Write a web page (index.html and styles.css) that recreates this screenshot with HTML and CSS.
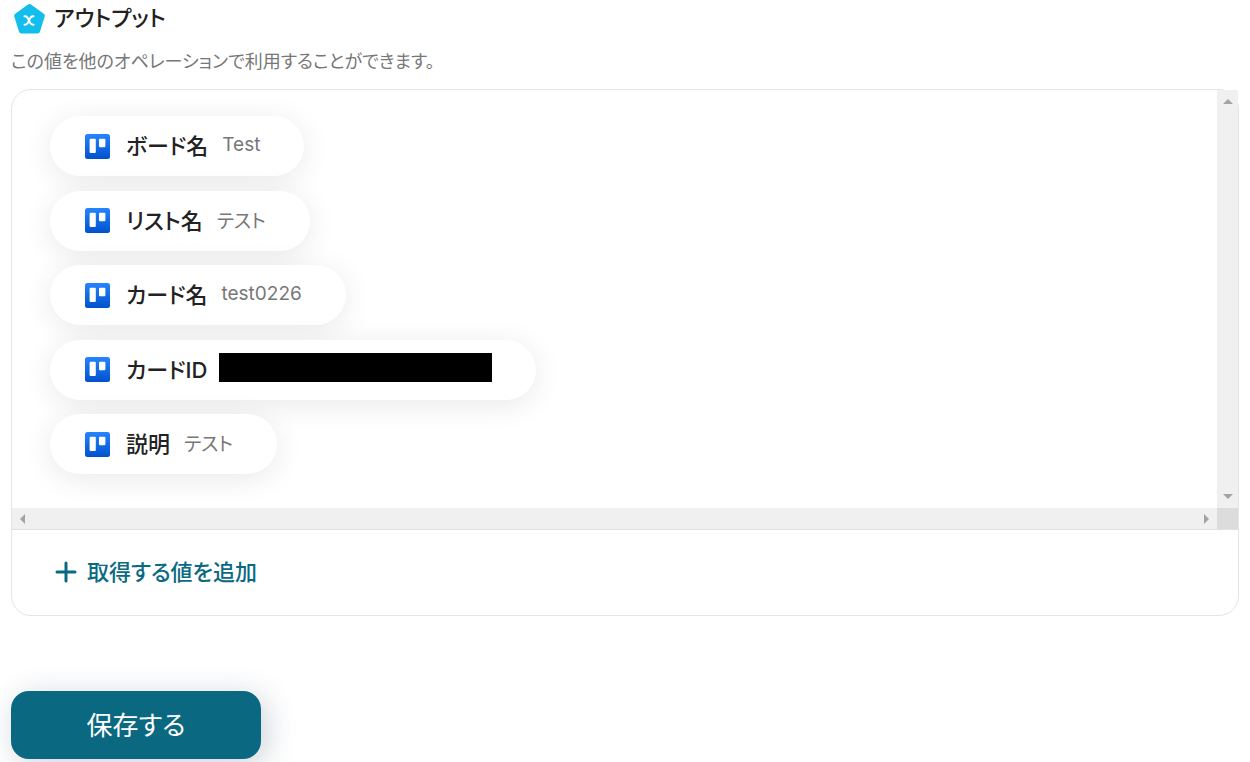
FILE: index.html
```html
<!DOCTYPE html>
<html lang="ja">
<head>
<meta charset="utf-8">
<title>アウトプット</title>
<link rel="stylesheet" href="styles.css">
</head>
<body>
<svg class="defs" width="0" height="0" aria-hidden="true">
  <defs>
    <linearGradient id="board-fill" x1="0" y1="0" x2="0" y2="1">
      <stop offset="0" stop-color="#2684ff"/>
      <stop offset="1" stop-color="#0052cc"/>
    </linearGradient>
    <symbol id="board" viewBox="0 0 25 25">
      <rect width="25" height="25" rx="2.5" fill="url(#board-fill)"/>
      <rect x="4.6" y="4.7" width="6.2" height="14.3" rx="1" fill="#fff"/>
      <rect x="14" y="4.7" width="6.4" height="8.5" rx="1" fill="#fff"/>
    </symbol>
  </defs>
</svg>
<main class="page">
  <header class="heading">
    <svg class="logo" viewBox="0 0 32 32" aria-hidden="true">
      <path d="M15.500 4.500 28.300 13.800 23.600 29H7.400L2.700 13.800Z" fill="#13bdec" stroke="#13bdec" stroke-width="5" stroke-linejoin="round"/>
      <path d="M10.500 14.300h.6c2.200 0 2.800 1.400 3.900 4.200s1.700 4.200 3.900 4.200h.6M19.500 14.300h-.6c-2.200 0-2.800 1.400-3.900 4.200s-1.700 4.200-3.900 4.200h-.6" fill="none" stroke="#fff" stroke-width="2" stroke-linecap="round"/>
    </svg>
    <h1 class="title">アウトプット</h1>
  </header>
  <p class="lead">この値を他のオペレーションで利用することができます。</p>

  <section class="panel">
    <div class="viewport">
      <ul class="chips">
        <li class="chip"><svg class="icon"><use href="#board"/></svg><span class="name">ボード名</span><span class="value">Test</span></li>
        <li class="chip"><svg class="icon"><use href="#board"/></svg><span class="name">リスト名</span><span class="value">テスト</span></li>
        <li class="chip"><svg class="icon"><use href="#board"/></svg><span class="name">カード名</span><span class="value">test0226</span></li>
        <li class="chip"><svg class="icon"><use href="#board"/></svg><span class="name">カードID</span><span class="masked"></span></li>
        <li class="chip"><svg class="icon"><use href="#board"/></svg><span class="name">説明</span><span class="value">テスト</span></li>
      </ul>
      <div class="bar bar-y">
        <svg width="10" height="5"><path d="M0 5 5 0l5 5z"/></svg>
        <svg width="10" height="5"><path d="M0 0h10L5 5z"/></svg>
      </div>
      <div class="bar bar-x">
        <svg width="5" height="10"><path d="M5 0v10L0 5z"/></svg>
        <svg width="5" height="10"><path d="M0 0l5 5-5 5z"/></svg>
      </div>
      <div class="corner"></div>
    </div>
    <button class="add" type="button">
      <svg class="plus" viewBox="0 0 22 22" aria-hidden="true"><path d="M11 2v18M2 11h18" stroke="currentColor" stroke-width="3" stroke-linecap="round"/></svg>
      <span class="add-label">取得する値を追加</span>
    </button>
  </section>

  <button class="save" type="button">保存する</button>
</main>
</body>
</html>
```
FILE: styles.css
```css
* { box-sizing: border-box; }

body {
  margin: 0;
  background: #fff;
  color: #222;
  font-family: Inter, "Noto Sans CJK JP", sans-serif;
  font-feature-settings: "palt";
}

.defs { position: absolute; }

.page { padding: 2px 11px 3px; }

.heading {
  display: flex;
  align-items: center;
  gap: 8px;
  height: 32px;
  padding-left: 3px;
}

.logo { width: 32px; height: 32px; }

.title {
  margin: 0;
  font-size: 22px;
  line-height: 32px;
  font-weight: 500;
}

.lead {
  margin: 16px 0 0;
  color: #777;
  font-size: 18px;
  line-height: 24px;
}

.panel {
  margin-top: 15px;
  border: 1px solid #e4e4e4;
  border-radius: 20px;
}

.viewport {
  display: grid;
  grid-template: 1fr 21px / 1fr 21px;
  height: 440px;
  border-bottom: 1px solid #e0e0e0;
}

.chips {
  display: flex;
  flex-direction: column;
  align-items: flex-start;
  justify-content: space-between;
  margin: 0;
  padding: 26px 38px 34px;
  list-style: none;
}

.chip {
  display: flex;
  align-items: center;
  height: 60px;
  padding: 0 44px 0 35px;
  border-radius: 30px;
  background: #fff;
  box-shadow: 0 5px 30px rgba(0, 0, 0, 0.09);
  white-space: nowrap;
}

.icon { width: 25px; height: 25px; margin-right: 16px; }

.name {
  padding-bottom: 4px;
  font-size: 22px;
  font-weight: 500;
}

.value {
  margin-left: 14px;
  padding-bottom: 3px;
  color: #777;
  font-size: 19px;
}

.masked {
  width: 273px;
  height: 29px;
  margin: 0 0 5px 12px;
  background: #000;
}

.bar {
  display: flex;
  align-items: center;
  justify-content: space-between;
  background: #f0f0f0;
  fill: #a3a3a3;
}

.bar-y { flex-direction: column; padding: 9px 0; }

.bar-x { padding: 0 8px; }

.corner { background: #dcdcdc; }

.add {
  display: flex;
  align-items: center;
  gap: 10px;
  height: 85px;
  padding: 0 43px 2px;
  border: 0;
  background: none;
  color: #0a6a82;
  font: inherit;
  font-size: 22px;
  font-weight: 500;
}

.add-label { padding-bottom: 4px; }

.plus { width: 22px; height: 22px; }

.save {
  display: block;
  width: 250px;
  height: 68px;
  margin-top: 75px;
  padding: 0 0 4px;
  border: 0;
  border-radius: 18px;
  background: #0a6881;
  box-shadow: 5px 5px 30px rgba(20, 50, 80, 0.22);
  color: #fff;
  font: inherit;
  font-size: 26px;
}
```
